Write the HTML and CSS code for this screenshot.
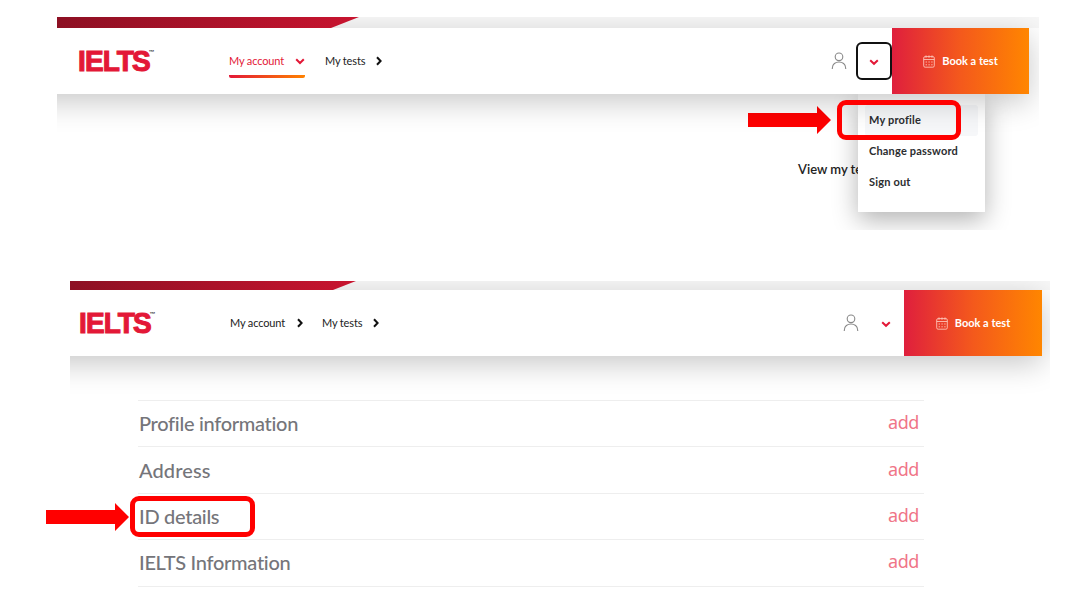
FILE: index.html
```html
<!DOCTYPE html>
<html lang="en">
<head>
  <meta charset="UTF-8">
  <meta name="viewport" content="width=device-width, initial-scale=1.0">
  <title>IELTS - My profile</title>
  <link rel="stylesheet" href="styles.css">
</head>
<body>
  <div class="screen screen-menu">
    <div class="strip"><div class="ribbon"></div></div>
    <header class="header">
      <div class="logo"><span class="wide">IE</span><span class="tight">L</span>TS<span class="tm">™</span></div>
      <nav class="nav">
        <a class="nav-item active"><span>My account</span>
          <svg class="chevron" width="10" height="7" viewBox="0 0 10 7"><path d="M1.2 1.2 5 5 8.8 1.2"/></svg>
        </a>
        <a class="nav-item"><span>My tests</span>
          <svg class="chevron" width="6" height="10" viewBox="0 0 6 10"><path d="M1 1.2 4.6 5 1 8.8"/></svg>
        </a>
      </nav>
      <div class="user">
        <svg class="user-icon" width="16" height="18" viewBox="0 0 16 18"><circle cx="8" cy="4.8" r="3.8"/><path d="M1.3 17V16.2C1.3 7.9 14.7 7.9 14.7 16.2V17"/></svg>
        <button class="toggle focused">
          <svg class="chevron" width="10" height="7" viewBox="0 0 10 7"><path d="M1.2 1.2 5 4.8 8.8 1.2"/></svg>
        </button>
      </div>
      <a class="book">
        <svg class="calendar" width="12" height="13" viewBox="0 0 12 13"><rect x=".7" y="1.6" width="10.6" height="10.6" rx="1.4"/><path d="M.7 4.5H11.3M3 .4V2.8M6 .4V2.8M9 .4V2.8"/><path class="dots" d="M2.6 7H10M2.6 9.8H10"/></svg>
        <span>Book a test</span>
      </a>
    </header>
    <div class="content">
      <p class="view-tests">View my tests</p>
      <ul class="dropdown">
        <li class="selected"><span>My profile</span></li>
        <li><span>Change password</span></li>
        <li><span>Sign out</span></li>
      </ul>
    </div>
  </div>

  <div class="screen screen-profile">
    <div class="strip"><div class="ribbon"></div></div>
    <header class="header">
      <div class="logo"><span class="wide">IE</span><span class="tight">L</span>TS<span class="tm">™</span></div>
      <nav class="nav">
        <a class="nav-item"><span>My account</span>
          <svg class="chevron" width="6" height="10" viewBox="0 0 6 10"><path d="M1 1.2 4.6 5 1 8.8"/></svg>
        </a>
        <a class="nav-item"><span>My tests</span>
          <svg class="chevron" width="6" height="10" viewBox="0 0 6 10"><path d="M1 1.2 4.6 5 1 8.8"/></svg>
        </a>
      </nav>
      <div class="user">
        <svg class="user-icon" width="16" height="18" viewBox="0 0 16 18"><circle cx="8" cy="4.8" r="3.8"/><path d="M1.3 17V16.2C1.3 7.9 14.7 7.9 14.7 16.2V17"/></svg>
        <button class="toggle">
          <svg class="chevron" width="10" height="7" viewBox="0 0 10 7"><path d="M1.2 1.2 5 4.8 8.8 1.2"/></svg>
        </button>
      </div>
      <a class="book">
        <svg class="calendar" width="12" height="13" viewBox="0 0 12 13"><rect x=".7" y="1.6" width="10.6" height="10.6" rx="1.4"/><path d="M.7 4.5H11.3M3 .4V2.8M6 .4V2.8M9 .4V2.8"/><path class="dots" d="M2.6 7H10M2.6 9.8H10"/></svg>
        <span>Book a test</span>
      </a>
    </header>
    <div class="sections">
      <div class="section"><h3>Profile information</h3><a>add</a></div>
      <div class="section"><h3 class="short">Address</h3><a>add</a></div>
      <div class="section"><h3>ID details</h3><a>add</a></div>
      <div class="section"><h3>IELTS Information</h3><a>add</a></div>
    </div>
  </div>

  <!-- red pointers over the screens -->
  <div class="arrow arrow-profile"></div>
  <div class="mark mark-profile"></div>
  <div class="arrow arrow-id"></div>
  <div class="mark mark-id"></div>
</body>
</html>
```

FILE: styles.css
```css
body {
  font-family: Lato, "Open Sans", sans-serif;
  font-variant-ligatures: none;
  margin: 0;
  background-color: #fff;
  height: 612px;
  position: relative;
  overflow: hidden;
}
.screen {
  overflow: hidden;
  position: relative;
}
.screen-menu {
  width: 982px;
  height: 213px;
  margin: 17px 0 51px 57px;
}
.screen-profile {
  width: 980px;
  height: 331px;
  margin-left: 70px;
}
.strip {
  height: 11px;
  background-color: #f7f7f7;
}
.screen-profile .strip {
  height: 9px;
}
.ribbon {
  position: relative;
  z-index: 3;
  width: 302px;
  height: 100%;
  background: linear-gradient(90deg, #8d1023, #c8142f);
  clip-path: polygon(0 0, 100% 0, 274px 100%, 0 100%);
}
.screen-profile .ribbon {
  width: 286px;
  clip-path: polygon(0 0, 100% 0, 263px 100%, 0 100%);
}

/* header bar, runs past the left edge so its shadow stays even */
.header {
  position: relative;
  z-index: 2;
  display: flex;
  align-items: center;
  box-sizing: border-box;
  width: 1032px;
  height: 66px;
  margin-left: -60px;
  padding-left: 81px;
  background-color: #fff;
  box-shadow: 0 8px 30px rgba(0, 0, 0, 0.22);
}
.screen-profile .header {
  padding-left: 69px;
}
.logo {
  width: 151px;
  font-family: "Liberation Sans", Arial, sans-serif;
  font-size: 29.5px;
  font-weight: bold;
  line-height: 30px;
  letter-spacing: -2.2px;
  color: #e31837;
  -webkit-text-stroke: 1.1px #e31837;
  display: flex;
  transform: scaleX(0.95);
  transform-origin: left;
}
.logo .wide {
  letter-spacing: -0.9px;
}
.logo .tight {
  letter-spacing: -3.2px;
}
.tm {
  font-size: 6px;
  line-height: 12px;
  letter-spacing: 0;
  color: #333;
  -webkit-text-stroke: 0;
}
.nav {
  display: flex;
  gap: 20px;
}
.nav-item {
  display: flex;
  align-items: center;
  justify-content: space-between;
  box-sizing: border-box;
  height: 33px;
  font-size: 11px;
  letter-spacing: -0.15px;
  color: #222;
  width: 57px;
}
.nav-item span,
.book span {
  padding-bottom: 2px;
}
.screen-profile .nav {
  gap: 19px;
}
.screen-profile .nav-item:first-child {
  width: 73px;
}
.nav-item.active {
  width: 76px;
  color: #e31837;
  background: linear-gradient(90deg, #e31837, #ff8200) bottom / 100% 3px no-repeat;
  border-radius: 2px;
}
.chevron {
  fill: none;
  stroke: #111;
  stroke-width: 2;
}
.active .chevron,
.toggle .chevron {
  stroke: #e31837;
}
.user {
  display: flex;
  align-items: center;
  gap: 9px;
  margin-left: auto;
}
.user-icon {
  fill: none;
  stroke: #888;
  stroke-width: 1.1;
}
.toggle {
  display: flex;
  align-items: center;
  justify-content: center;
  width: 36px;
  height: 38px;
  padding: 2px 0 0;
  border: 2px solid transparent;
  border-radius: 6px;
  background-color: transparent;
}
.toggle.focused {
  border-color: #111;
}
.book {
  display: flex;
  align-items: center;
  justify-content: center;
  gap: 7px;
  width: 137px;
  height: 66px;
  box-sizing: border-box;
  background: linear-gradient(90deg, #df1f3d, #f4591c 50%, #ff8600);
  color: #fff;
  font-size: 11px;
  font-weight: bold;
}
.screen-profile .book {
  width: 138px;
}
.calendar {
  fill: none;
  stroke: #ffd3c8;
  stroke-width: 0.8;
}
.calendar .dots {
  stroke-dasharray: 1.4 1.4;
}

.content {
  display: flex;
  position: relative;
}
.view-tests {
  margin: 65px 0 0 741px;
  font-size: 13px;
  line-height: 20px;
  font-weight: 600;
  color: #222;
}
.dropdown {
  position: absolute;
  left: 801px;
  top: 0;
  box-sizing: border-box;
  width: 127px;
  height: 118px;
  margin: 0;
  padding: 11px 7px 0;
  list-style: none;
  background-color: #fff;
  box-shadow: 0 8px 24px rgba(0, 0, 0, 0.3);
}
.dropdown li {
  height: 31px;
  padding-left: 4px;
  border-radius: 3px;
  font-size: 11px;
  letter-spacing: 0.18px;
  line-height: 30px;
  font-weight: bold;
  color: #2b2d30;
  white-space: nowrap;
}
.dropdown .selected {
  background-color: #f6f7f9;
}

.sections {
  width: 786px;
  margin: 44px 0 0 68px;
  border-top: 1px solid #eee;
}
.section {
  display: flex;
  justify-content: space-between;
  align-items: center;
  box-sizing: border-box;
  height: 46.4px;
  padding: 0 5px 0 1px;
  border-bottom: 1px solid #eee;
}
.section h3 {
  margin: 0;
  padding-bottom: 1px;
  font-size: 20px;
  font-weight: 500;
  letter-spacing: -0.3px;
  color: #75757a;
}
.section .short {
  letter-spacing: 0.1px;
}
.section a {
  font-family: "Noto Sans", sans-serif;
  font-size: 18px;
  font-weight: 400;
  letter-spacing: -0.4px;
  color: #f07588;
  padding-bottom: 3px;
}

.arrow {
  position: absolute;
  width: 83px;
  height: 28px;
  background-color: #f00;
  clip-path: polygon(0 25%, 69px 25%, 69px 0, 100% 50%, 69px 100%, 69px 75%, 0 75%);
}
.mark {
  position: absolute;
  z-index: 5;
  box-sizing: border-box;
  border: 5px solid #f00;
  border-radius: 9px;
}
.arrow-profile {
  left: 748px;
  top: 106px;
}
.mark-profile {
  left: 837px;
  top: 100px;
  width: 124px;
  height: 40px;
}
.arrow-id {
  left: 46px;
  top: 503px;
}
.mark-id {
  left: 130px;
  top: 496px;
  width: 125px;
  height: 41px;
}
```
